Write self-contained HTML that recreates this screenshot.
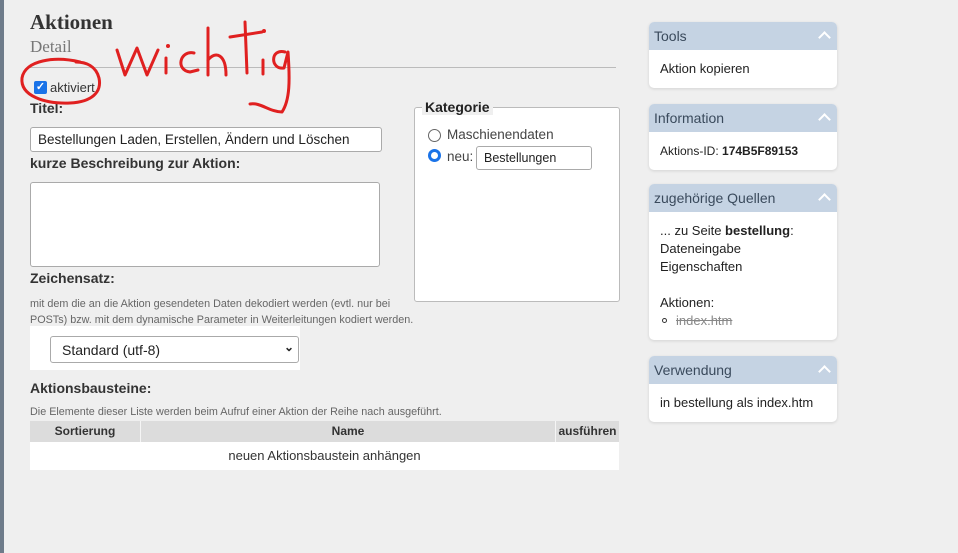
<!DOCTYPE html>
<html><head><meta charset="utf-8"><style>
*{box-sizing:border-box}
body{margin:0;width:958px;height:553px;background:#efefef;font-family:"Liberation Sans",sans-serif;position:relative;overflow:hidden;color:#222}
.abs{position:absolute}
.lbl{font-weight:bold;font-size:14px;color:#333}
.small{font-size:10.8px;color:#666;line-height:16px}
.box{background:#fff;border:1px solid #aaa;border-radius:3px}
.panel{position:absolute;left:649px;width:188px;background:#fff;border-radius:5px;box-shadow:0 1px 3px rgba(0,0,0,.12);overflow:hidden}
.panel .h{background:#c5d3e3;height:28px;line-height:28px;padding-left:5px;font-size:14px;color:#3a4a5c;position:relative}
.panel .h:after{content:"";position:absolute;right:8px;top:11px;width:7px;height:7px;border-left:2px solid #fff;border-top:2px solid #fff;transform:rotate(45deg)}
.panel .b{padding:10px 11px;font-size:13px;color:#222;line-height:18px}
</style></head><body>
<div class="abs" style="left:0;top:0;width:4px;height:553px;background:#6e7b8a"></div>
<div class="abs" style="left:30px;top:10px;font-family:'Liberation Serif',serif;font-weight:bold;font-size:21px;color:#333">Aktionen</div>
<div class="abs" style="left:30px;top:37px;font-family:'Liberation Serif',serif;font-size:17px;color:#777">Detail</div>
<div class="abs" style="left:30px;top:67px;width:586px;height:1px;background:#bbb"></div>
<div class="abs" style="left:34px;top:81px;width:13px;height:13px;background:#1a73e8;border-radius:2px;color:#fff;font-size:11px;line-height:13px;text-align:center;font-weight:bold">✓</div>
<div class="abs" style="left:50px;top:80px;font-size:13px;color:#333">aktiviert</div>
<div class="abs lbl" style="left:30px;top:100px">Titel:</div>
<div class="abs box" style="left:30px;top:127px;width:352px;height:25px;font-size:13.5px;padding:4px 7px">Bestellungen Laden, Erstellen, Ändern und Löschen</div>
<div class="abs lbl" style="left:30px;top:155px">kurze Beschreibung zur Aktion:</div>
<div class="abs box" style="left:30px;top:182px;width:350px;height:85px"></div>
<div class="abs lbl" style="left:30px;top:270px">Zeichensatz:</div>
<div class="abs small" style="left:30px;top:296px">mit dem die an die Aktion gesendeten Daten dekodiert werden (evtl. nur bei<br>POSTs) bzw. mit dem dynamische Parameter in Weiterleitungen kodiert werden.</div>
<div class="abs" style="left:30px;top:326px;width:270px;height:44px;background:#fff"></div>
<div class="abs box" style="left:50px;top:336px;width:249px;height:27px;font-size:14px;padding:5px 11px">Standard (utf-8)<span style="position:absolute;right:4px;top:3px;font-size:12px;font-weight:bold">⌄</span></div>
<div class="abs lbl" style="left:30px;top:380px">Aktionsbausteine:</div>
<div class="abs small" style="left:30px;top:404px">Die Elemente dieser Liste werden beim Aufruf einer Aktion der Reihe nach ausgeführt.</div>
<div class="abs" style="left:30px;top:421px;width:589px;height:21px;background:#dcdcdc;font-size:12px;font-weight:bold;color:#333;line-height:21px">
<span class="abs" style="left:0;width:110px;text-align:center">Sortierung</span>
<span class="abs" style="left:110px;width:1px;height:21px;background:#f5f5f5"></span>
<span class="abs" style="left:111px;width:414px;text-align:center">Name</span>
<span class="abs" style="left:525px;width:1px;height:21px;background:#f5f5f5"></span>
<span class="abs" style="left:526px;width:63px;text-align:center">ausführen</span></div>
<div class="abs" style="left:30px;top:442px;width:589px;height:28px;background:#fff;text-align:center;font-size:13px;line-height:28px;color:#333">neuen Aktionsbaustein anhängen</div>
<div class="abs" style="left:414px;top:107px;width:206px;height:195px;border:1px solid #bbb;border-radius:3px;background:#fff"></div>
<div class="abs" style="left:422px;top:99px;background:#efefef;padding:0 3px;font-weight:bold;font-size:14px">Kategorie</div>
<div class="abs" style="left:428px;top:129px;width:13px;height:13px;border:1px solid #666;border-radius:50%"></div>
<div class="abs" style="left:447px;top:127px;font-size:13.5px;color:#444">Maschienendaten</div>
<div class="abs" style="left:428px;top:149px;width:13px;height:13px;border:3px solid #1a73e8;border-radius:50%"></div>
<div class="abs" style="left:447px;top:149px;font-size:13.5px;color:#444">neu:</div>
<div class="abs box" style="left:476px;top:146px;width:116px;height:24px;font-size:12.5px;padding:4px 7px">Bestellungen</div>
<div class="panel" style="top:22px"><div class="h">Tools</div><div class="b">Aktion kopieren</div></div>
<div class="panel" style="top:104px"><div class="h">Information</div><div class="b" style="font-size:12px">Aktions-ID: <b>174B5F89153</b></div></div>
<div class="panel" style="top:184px"><div class="h">zugehörige Quellen</div><div class="b" style="padding-top:10px">... zu Seite <b>bestellung</b>:<br>Dateneingabe<br>Eigenschaften<br><br>Aktionen:<br><span style="display:inline-block;width:5px;height:5px;border:1px solid #333;border-radius:50%;margin:0 9px 2px 2px"></span><s style="color:#888">index.htm</s></div></div>
<div class="panel" style="top:356px"><div class="h">Verwendung</div><div class="b">in bestellung als index.htm</div></div>
<svg class="abs" style="left:0;top:0" width="958" height="553"><g fill="none" stroke="#e02020" stroke-width="3" stroke-linecap="round" stroke-linejoin="round">
<path d="M80 62 C55 56 25 60 22 78 C20 96 45 104 70 103 C92 102 102 92 99 78 C96 66 86 62 76 62"/>
<path d="M117 50 L125 75 L137 48 L147 75 L158 50"/>
<path d="M166 58 L166 73"/>
<path d="M194 53 C180 50 175 70 190 72 L198 70"/>
<path d="M208 28 L208 75 M208 60 C216 50 226 55 226 75"/>
<path d="M230 37 L262 32 M245 22 L247 73"/>
<path d="M263 60 L263 74"/>
<path d="M285 52 C270 48 270 70 284 68 L288 52 C290 80 290 100 282 112 C270 112 260 102 250 104"/>
</g><g fill="#e02020"><circle cx="168" cy="46" r="2"/><circle cx="264" cy="31" r="2"/></g></svg>
</body></html>
